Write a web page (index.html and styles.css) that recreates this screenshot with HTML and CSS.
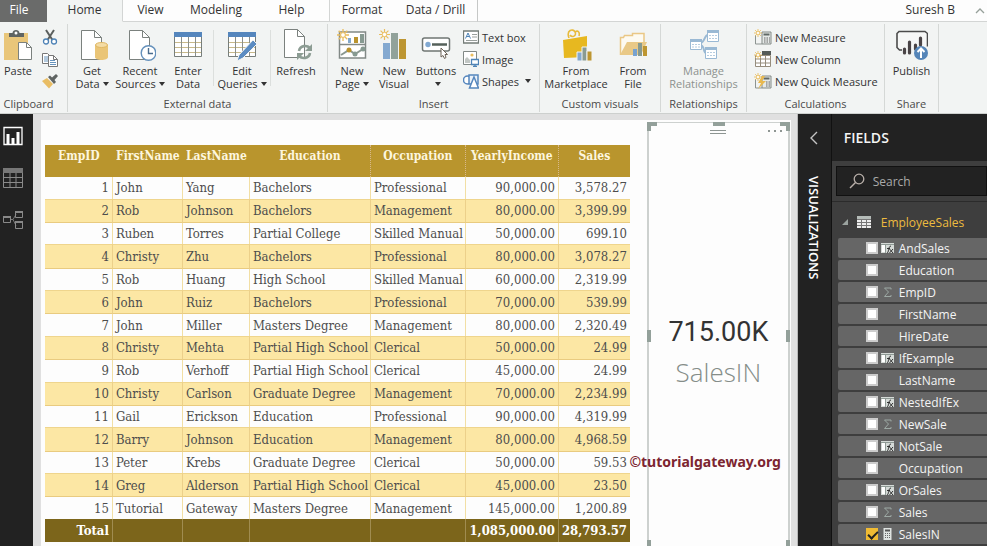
FILE: index.html
```html
<!DOCTYPE html>
<html lang="en">
<head>
<meta charset="utf-8">
<title>Employee Sales</title>
<link rel="stylesheet" href="styles.css">
</head>
<body>
<svg class="defs" aria-hidden="true">
  <symbol id="i-spark" viewBox="0 0 12 12"><path d="M6 0v12M0 6h12M1.7 1.7l8.6 8.6M10.3 1.7l-8.6 8.6" stroke="#e9bd5e" stroke-width="1.3"/><circle cx="6" cy="6" r="2.4" fill="#fff" stroke="#e9bd5e"/></symbol>
  <symbol id="i-fx" viewBox="0 0 13 12"><path d="M0 1h13v10H0z" fill="#d5dad7"/><path d="M1 3h3v7H1z" fill="#fff"/><path d="M0 2.5h13M4.5 2.5V11" stroke="#8f9a95"/><path d="M6 11c2 0 1-7 4-7M6 6.500h3M8.500 7l3.500 4M12 7l-3.500 4" stroke="#333" fill="none"/></symbol>
  <symbol id="i-sum" viewBox="0 0 13 12"><path d="M10 3.500V2H3.500l4 4-4 4.500H10V9" stroke="#9da9a4" fill="none"/></symbol>
  <symbol id="i-calc" viewBox="0 0 13 12"><path d="M2.500 0h8v12h-8z" fill="#dfe3e1"/><path d="M4 1.500h5v2H4z" fill="#555"/><path d="M4 5.500h5M4 7.500h5M4 9.500h5" stroke="#666" stroke-dasharray="1 1"/></symbol>
</svg>

<header class="ribbon">
  <nav class="tabs">
    <a class="tab file" href="#">File</a>
    <a class="tab home" href="#">Home</a>
    <a class="tab view" href="#">View</a>
    <a class="tab modeling" href="#">Modeling</a>
    <a class="tab help" href="#">Help</a>
    <a class="tab format" href="#">Format</a>
    <a class="tab drill" href="#">Data / Drill</a>
    <span class="user">Suresh B</span>
    <button class="collapse" aria-label="Collapse ribbon"><svg width="10" height="6" viewBox="0 0 10 6"><path d="M1 5l4-4 4 4" fill="none" stroke="#96a09a" stroke-width="1.300"/></svg></button>
  </nav>
  <div class="groups">
    <section class="group g-clip">
      <div class="tools">
        <button class="big paste"><svg width="32" height="32" viewBox="0 0 32 32"><path d="M2 4h24v27H2z" fill="#e9c67a"/><path d="M7 8V4h3.500c0-4 7-4 7 0H22v4z" fill="#5f6462"/><circle cx="14" cy="4" r="1.500" fill="#fff"/><path d="M16.500 13.500h8l5 5v12h-13z" fill="#fff" stroke="#7b817e"/><path d="M24.500 13.500v5h5" fill="none" stroke="#7b817e"/></svg><span>Paste</span></button>
        <div class="minis">
          <button aria-label="Cut"><svg width="16" height="16" viewBox="0 0 16 16"><path d="M4 1l6.500 10M12 1L5.500 11" stroke="#5b5f5d" stroke-width="2"/><circle cx="4" cy="12.500" r="2.500" fill="#fff" stroke="#4e83b6" stroke-width="1.300"/><circle cx="12" cy="12.500" r="2.500" fill="#fff" stroke="#4e83b6" stroke-width="1.300"/></svg></button>
          <button aria-label="Copy"><svg width="16" height="16" viewBox="0 0 16 16"><path d="M.5 2.500h5l3 3v7h-8z" fill="#fff" stroke="#777"/><path d="M2 6h4M2 8h4M2 10h4" stroke="#6794bd"/><path d="M6.500 4.500h5l4 4v7h-9z" fill="#fff" stroke="#777"/><path d="M11.500 4.500v4h4" fill="none" stroke="#777"/><path d="M8 9.500h5M8 11.500h6M8 13.500h6" stroke="#6794bd"/></svg></button>
          <button aria-label="Format painter"><svg width="16" height="16" viewBox="0 0 16 16"><path d="M0 8l5-3 6 6-4 4.500z" fill="#e9bd64"/><path d="M6 4l2-1.500 2 2 4-3.500 2 2-3.500 4 1.500 2-2 2z" fill="#5f6462"/></svg></button>
        </div>
      </div>
      <h2>Clipboard</h2>
    </section>

    <section class="group g-ext">
      <div class="tools">
        <button class="big"><svg width="32" height="32" viewBox="0 0 32 32"><path d="M5.500 1.500h13l7 7v22h-20z" fill="#fff" stroke="#7b817e"/><path d="M18.500 1.500v7h7" fill="none" stroke="#7b817e"/><path d="M19 16v12c0 4 13 4 13 0V16z" fill="#eac577"/><ellipse cx="25.500" cy="16" rx="6" ry="2.500" fill="#f4dca5" stroke="#dfb763"/></svg><span>Get<br>Data<i></i></span></button>
        <button class="big"><svg width="32" height="32" viewBox="0 0 32 32"><path d="M5.500 1.500h13l7 7v22h-20z" fill="#fff" stroke="#7b817e"/><path d="M18.500 1.500v7h7" fill="none" stroke="#7b817e"/><circle cx="24.500" cy="24" r="7.300" fill="#fff" stroke="#6490bb" stroke-width="1.400"/><path d="M24.500 19v5.500H29" fill="none" stroke="#4a6d8e" stroke-width="1.400"/></svg><span>Recent<br>Sources<i></i></span></button>
        <button class="big"><svg width="32" height="32" viewBox="0 0 32 32"><path d="M2.500 3.500h27v24h-27z" fill="#fff"/><path d="M3 13.500h27M3 18.500h27M3 23.500h27" stroke="#c8b98a"/><path d="M9.500 8v20M16.500 8v20M23.500 8v20" stroke="#8a8f8c"/><path d="M2.500 3.500h27v24h-27z" fill="none" stroke="#777e7b"/><path d="M2 3h28v5H2z" fill="#5586bd"/></svg><span>Enter<br>Data</span></button>
        <hr>
        <button class="big wide"><svg width="32" height="32" viewBox="0 0 32 32"><path d="M2.500 3.500h27v24h-27z" fill="#fff"/><path d="M3 13.500h27M3 18.500h27M3 23.500h27" stroke="#c8b98a"/><path d="M9.500 8v20M16.500 8v20M23.500 8v20" stroke="#8a8f8c"/><path d="M2.500 3.500h27v24h-27z" fill="none" stroke="#777e7b"/><path d="M2 3h28v5H2z" fill="#5586bd"/><path d="M27 11l4 4-14 14-6 3 2-6z" fill="#5b8cc2" stroke="#f2f4f3"/></svg><span>Edit<br>Queries<i></i></span></button>
        <hr>
        <button class="big"><svg width="32" height="32" viewBox="0 0 32 32"><path d="M4.500.5h13l7 7v21h-20z" fill="#fff" stroke="#7b817e"/><path d="M17.500.5v7h7" fill="none" stroke="#7b817e"/><path d="M19 22c1-6 8-6 11-3M30 24c-1 6-8 6-11 3" fill="none" stroke="#8d9d94" stroke-width="2.600"/><path d="M32 15v7h-7zM17 31v-7h7z" fill="#8d9d94"/></svg><span>Refresh</span></button>
      </div>
      <h2>External data</h2>
    </section>

    <section class="group g-ins">
      <div class="tools">
        <button class="big"><svg width="32" height="32" viewBox="0 0 32 32"><path d="M3.500 3h26v26h-26zM3 15.500h27" fill="#fff" stroke="#828986" stroke-width="1.500"/><path d="M12 9h3v5h-3z" fill="#83a8cb"/><path d="M18 8h4v6h-4z" fill="#ba932d"/><path d="M24 5h4v9h-4z" fill="#879a91"/><path d="M5 26l8-5 6 4 8-5" fill="none" stroke="#8b9891" stroke-width="2"/><circle cx="13" cy="21" r="2.500" fill="#ba932d"/><circle cx="19" cy="25" r="2.500" fill="#879a91"/><circle cx="27" cy="20" r="2.500" fill="#879a91"/><use href="#i-spark" x="1" y="0" width="12" height="12"/></svg><span>New<br>Page<i></i></span></button>
        <button class="big nv"><svg width="32" height="32" viewBox="0 0 32 32"><path d="M5 14h7v16H5z" fill="#84a9d0"/><path d="M13 4h7v26h-7z" fill="#91a29a"/><path d="M21 10h7v20h-7z" fill="#bd9632"/><use href="#i-spark" x="1" y="0" width="11" height="11"/></svg><span>New<br>Visual</span></button>
        <button class="big"><svg width="32" height="32" viewBox="0 0 32 32"><rect x="2.500" y="9" width="27" height="13" rx="2" fill="#fff" stroke="#6f7673" stroke-width="1.500"/><circle cx="8" cy="15.500" r="2.700" fill="#82a9d2"/><path d="M12 15.500h15" stroke="#55605a" stroke-width="2.500"/><path d="M21 19v9l2-1.500 1.500 3 1.500-1-1-3h2.500z" fill="#fff" stroke="#6c6257"/></svg><span>Buttons<br><i></i></span></button>
        <div class="stack">
          <button><svg width="16" height="16" viewBox="0 0 16 16"><path d="M.5 2h15v12H.5z" fill="#fff" stroke="#747c78" stroke-width="1.300"/><path d="M2.500 9.500L5 4l2.500 5.500M3.500 7.500h3" fill="none" stroke="#4e83b6"/><path d="M9 5.500h5M9 8h5M3 11.500h11" stroke="#999f9c"/></svg>Text box</button>
          <button><svg width="16" height="16" viewBox="0 0 16 16"><path d="M.5.5h13v13H.5z" fill="#fff" stroke="#828986"/><circle cx="9" cy="4" r="1.600" fill="#e9bd5e"/><path d="M2 12V8l2-2 3 3v3z" fill="#c2c7c4"/><path d="M8.500 8.500h7v5h-7zM12 13v2.500M10 15.500h4" fill="#fff" stroke="#4e83b6" stroke-width="1.300"/></svg>Image</button>
          <button><svg width="16" height="16" viewBox="0 0 16 16"><circle cx="4.500" cy="7" r="4" fill="#fff" stroke="#5586bd" stroke-width="1.500"/><path d="M6 2h9v9H6z" fill="#eaf1f8" stroke="#5586bd" stroke-width="1.500"/><path d="M11 4l4.500 11h-9z" fill="#fff" stroke="#5586bd" stroke-width="1.500"/></svg>Shapes<i></i></button>
        </div>
      </div>
      <h2>Insert</h2>
    </section>

    <section class="group g-cus">
      <div class="tools">
        <button class="big mk"><svg width="32" height="32" viewBox="0 0 32 32"><path d="M9 9c-3-8 4-10 6-6s-3 6-5 3M15 3c3-2 5 0 4 4" fill="none" stroke="#e8bb3b" stroke-width="1.600"/><path d="M3 11l24-4v21L4 29z" fill="#e7b820"/><path d="M17 23h6v9h-6z" fill="#84a9d0" stroke="#f2f4f3"/><path d="M22 18h5v14h-5z" fill="#8a9b92" stroke="#f2f4f3"/><path d="M27 22h5v10h-5z" fill="#bd9632" stroke="#f2f4f3"/></svg><span>From<br>Marketplace</span></button>
        <button class="big"><svg width="32" height="32" viewBox="0 0 32 32"><path d="M3.500 26V8.500h3l1-2h8V4.500H27v9" fill="#fdfaf1" stroke="#eac785" stroke-width="1.500"/><path d="M3 26l7-13h20l-6 13z" fill="#e9c987"/><path d="M16 20h4v7h-4z" fill="#77a2d0"/><path d="M21 14h4v13h-4z" fill="#879a91"/><path d="M26 17h4v10h-4z" fill="#bd9632"/></svg><span>From<br>File</span></button>
      </div>
      <h2>Custom visuals</h2>
    </section>

    <section class="group g-rel">
      <div class="tools">
        <button class="big mk" disabled><svg width="32" height="32" viewBox="0 0 32 32"><path d="M12 14c5 0 4-8 8-8M12 16c5 0 3 8 6 8" fill="none" stroke="#9ab9d4" stroke-width="2"/><path d="M2.500 10.500h11v10h-11zM19.500 1.500h11v11h-11zM17.500 18.500h11v11h-11z" fill="#fff" stroke="#9ab9d4"/><path d="M2 10h12v3H2zM19 1h12v3H19zM17 18h12v3H17z" fill="#9ab9d4"/><path d="M4 15.500h8M4 18h8M21 6.500h8M21 9.500h8M19 23.500h8M19 26.500h8" stroke="#b6cde0" stroke-dasharray="2 1"/></svg><span>Manage<br>Relationships</span></button>
      </div>
      <h2>Relationships</h2>
    </section>

    <section class="group g-calc">
      <div class="tools">
        <div class="stack">
          <button><svg width="18" height="16" viewBox="0 0 18 16"><path d="M1.500 6v9H8" fill="none" stroke="#8d9491"/><path d="M8 3h9v12H8z" fill="#e5e9e7" stroke="#828986"/><path d="M9.500 5.500h6" stroke="#606865" stroke-width="2"/><path d="M10 9h6M10 11h6M10 13h6" stroke="#666" stroke-dasharray="1.500 1"/><use href="#i-spark" x="0" y="0" width="8" height="8"/></svg>New Measure</button>
          <button><svg width="18" height="16" viewBox="0 0 18 16"><path d="M1.500 4.500h15v11h-15zM1 8h16M1 12h16M6.500 4v12M11.500 4v12" fill="#fff" stroke="#968d7d"/><path d="M8 0h9v4H8z" fill="#555b58"/><use href="#i-spark" x="0" y="0" width="8" height="8"/></svg>New Column</button>
          <button><svg width="18" height="16" viewBox="0 0 18 16"><path d="M1.500 6v9H8" fill="none" stroke="#8d9491"/><path d="M8 3h9v12H8z" fill="#e5e9e7" stroke="#828986"/><path d="M9.500 5.500h6" stroke="#606865" stroke-width="2"/><path d="M12 9h4M12 11h4M12 13h4" stroke="#666" stroke-dasharray="1.500 1"/><path d="M8 3l-4 7h3l-3 6 8-8H8l3-5z" fill="#e9b94f"/><use href="#i-spark" x="0" y="0" width="8" height="8"/></svg>New Quick Measure</button>
        </div>
      </div>
      <h2>Calculations</h2>
    </section>

    <section class="group g-share">
      <div class="tools">
        <button class="big"><svg width="32" height="32" viewBox="0 0 32 32"><path d="M6 21H3.500l-2.500-2.500v-14l2-2h26l2.500 2v13" fill="#f6f7f6" stroke="#4b4b4b" stroke-width="1.600"/><path d="M8.500 24v-4M13.500 24V13M19.500 20v-4M24.500 16V9" stroke="#4a4446" stroke-width="3.200" stroke-linecap="round"/><circle cx="25" cy="24" r="7" fill="#5585b8"/><path d="M25 29v-9M21.500 23l3.500-3.500 3.500 3.500" fill="none" stroke="#fff" stroke-width="2"/></svg><span>Publish</span></button>
      </div>
      <h2>Share</h2>
    </section>
  </div>
</header>

<main class="work">
  <nav class="rail">
    <button aria-label="Report view"><svg width="20" height="20" viewBox="0 0 20 20"><path d="M1 1.500h18v17H1z" fill="none" stroke="#fff" stroke-width="1.300"/><path d="M5 18V8M10 18v-6M15 18V6" stroke="#fff" stroke-width="3"/></svg></button>
    <button aria-label="Data view"><svg width="20" height="20" viewBox="0 0 20 20"><path d="M.5.500h19v19H.5zM1 9.500h18M1 14.500h18M7 4v15M13 4v15" fill="none" stroke="#8a8a8a"/><path d="M0 0h20v5H0z" fill="#777"/></svg></button>
    <button aria-label="Model view"><svg width="20" height="20" viewBox="0 0 20 20"><path d="M8 9.500h2l3-5M10 9.500l3 6" fill="none" stroke="#777"/><path d="M.5 6.500h7v6h-7zM12.500 1.500h7v6h-7zM12.500 11.500h7v7h-7z" fill="none" stroke="#8a8a8a"/><path d="M0 6h8v2H0zM12 1h8v2h-8zM12 11h8v2h-8z" fill="#888"/></svg></button>
  </nav>

  <div class="canvas">
    <div class="page">
      <div class="tablewrap">
      <table class="data">
        <colgroup><col class="c1"><col class="c2"><col class="c3"><col class="c4"><col class="c5"><col class="c6"><col class="c7"></colgroup>
        <thead><tr><th>EmpID</th><th>FirstName</th><th>LastName</th><th>Education</th><th>Occupation</th><th>YearlyIncome</th><th>Sales</th></tr></thead>
        <tbody>
          <tr><td>1</td><td>John</td><td>Yang</td><td>Bachelors</td><td>Professional</td><td>90,000.00</td><td>3,578.27</td></tr>
          <tr><td>2</td><td>Rob</td><td>Johnson</td><td>Bachelors</td><td>Management</td><td>80,000.00</td><td>3,399.99</td></tr>
          <tr><td>3</td><td>Ruben</td><td>Torres</td><td>Partial College</td><td>Skilled Manual</td><td>50,000.00</td><td>699.10</td></tr>
          <tr><td>4</td><td>Christy</td><td>Zhu</td><td>Bachelors</td><td>Professional</td><td>80,000.00</td><td>3,078.27</td></tr>
          <tr><td>5</td><td>Rob</td><td>Huang</td><td>High School</td><td>Skilled Manual</td><td>60,000.00</td><td>2,319.99</td></tr>
          <tr><td>6</td><td>John</td><td>Ruiz</td><td>Bachelors</td><td>Professional</td><td>70,000.00</td><td>539.99</td></tr>
          <tr><td>7</td><td>John</td><td>Miller</td><td>Masters Degree</td><td>Management</td><td>80,000.00</td><td>2,320.49</td></tr>
          <tr><td>8</td><td>Christy</td><td>Mehta</td><td>Partial High School</td><td>Clerical</td><td>50,000.00</td><td>24.99</td></tr>
          <tr><td>9</td><td>Rob</td><td>Verhoff</td><td>Partial High School</td><td>Clerical</td><td>45,000.00</td><td>24.99</td></tr>
          <tr><td>10</td><td>Christy</td><td>Carlson</td><td>Graduate Degree</td><td>Management</td><td>70,000.00</td><td>2,234.99</td></tr>
          <tr><td>11</td><td>Gail</td><td>Erickson</td><td>Education</td><td>Professional</td><td>90,000.00</td><td>4,319.99</td></tr>
          <tr><td>12</td><td>Barry</td><td>Johnson</td><td>Education</td><td>Management</td><td>80,000.00</td><td>4,968.59</td></tr>
          <tr><td>13</td><td>Peter</td><td>Krebs</td><td>Graduate Degree</td><td>Clerical</td><td>50,000.00</td><td>59.53</td></tr>
          <tr><td>14</td><td>Greg</td><td>Alderson</td><td>Partial High School</td><td>Clerical</td><td>45,000.00</td><td>23.50</td></tr>
          <tr><td>15</td><td>Tutorial</td><td>Gateway</td><td>Masters Degree</td><td>Management</td><td>145,000.00</td><td>1,200.89</td></tr>
        </tbody>
        <tfoot><tr><td>Total</td><td></td><td></td><td></td><td></td><td>1,085,000.00</td><td>28,793.57</td></tr></tfoot>
      </table>
      </div>
      <div class="card">
        <b class="h tl"></b><b class="h tc"></b><b class="h tr"></b><b class="h ml"></b><b class="h mr"></b><b class="h bl"></b><b class="h br"></b>
        <div class="grip"></div>
        <div class="more"><span></span><span></span><span></span></div>
        <div class="value">715.00K</div>
        <div class="caption">SalesIN</div>
      </div>
      <div class="mark">©tutorialgateway.org</div>
    </div>
  </div>

  <aside class="viz">
    <button aria-label="Expand visualizations"><svg width="10" height="14" viewBox="0 0 10 14"><path d="M8 1L2 7l6 6" fill="none" stroke="#c4c4c4" stroke-width="1.400"/></svg></button>
    <h2>VISUALIZATIONS</h2>
  </aside>

  <aside class="fields">
    <h2>FIELDS</h2>
    <div class="searchwrap">
      <label class="search"><svg width="16" height="16" viewBox="0 0 16 16"><circle cx="10" cy="6" r="4.800" fill="none" stroke="#b9b0aa" stroke-width="1.300"/><path d="M6.500 9.500L1 15" stroke="#b9b0aa" stroke-width="1.500"/></svg><input type="text" placeholder="Search" aria-label="Search"></label>
    </div>
    <div class="entity"><svg width="8" height="8" viewBox="0 0 8 8"><path d="M7 1v6H1z" fill="#9ba39f"/></svg><svg width="14" height="12" viewBox="0 0 14 12"><path d="M0 0h14v12H0z" fill="#eee"/><path d="M0 0h14v3H0z" fill="#b5bcb8"/><path d="M0 3.500h14M0 6.500h14M0 9.500h14M4.500 3v9M9.500 3v9" stroke="#777"/></svg><span>EmployeeSales</span></div>
    <div class="list">
      <label><input type="checkbox"><svg><use href="#i-fx"/></svg>AndSales</label>
      <label><input type="checkbox"><svg></svg>Education</label>
      <label><input type="checkbox"><svg><use href="#i-sum"/></svg>EmpID</label>
      <label><input type="checkbox"><svg></svg>FirstName</label>
      <label><input type="checkbox"><svg></svg>HireDate</label>
      <label><input type="checkbox"><svg><use href="#i-fx"/></svg>IfExample</label>
      <label><input type="checkbox"><svg></svg>LastName</label>
      <label><input type="checkbox"><svg><use href="#i-fx"/></svg>NestedIfEx</label>
      <label><input type="checkbox"><svg><use href="#i-sum"/></svg>NewSale</label>
      <label><input type="checkbox"><svg><use href="#i-fx"/></svg>NotSale</label>
      <label><input type="checkbox"><svg></svg>Occupation</label>
      <label><input type="checkbox"><svg><use href="#i-fx"/></svg>OrSales</label>
      <label><input type="checkbox"><svg><use href="#i-sum"/></svg>Sales</label>
      <label><input type="checkbox" checked><svg><use href="#i-calc"/></svg>SalesIN</label>
    </div>
  </aside>
</main>
</body>
</html>
```
FILE: styles.css
```css
* { box-sizing: border-box; }
body {
  margin: 0;
  height: 100vh;
  display: flex;
  flex-direction: column;
  overflow: hidden;
  font: 12px/13px "Open Sans", "Noto Sans", sans-serif;
  color: #333;
  background: #e0e0e0;
}
.defs { position: absolute; width: 0; height: 0; }
button { margin: 0; padding: 0; border: 0; background: none; font: inherit; color: inherit; }
h2 { margin: 0; font-weight: 400; font-size: 11px; line-height: 16px; }
svg { flex: none; display: block; }

/* Ribbon */
.ribbon { flex: none; background: #f2f4f3; border-bottom: 1px solid #cdd0ce; }
.tabs { display: flex; height: 22px; background: #fdfdfd; line-height: 20px; }
.tab { color: #333; text-decoration: none; text-align: center; border-bottom: 1px solid #d3d5d4; }
.file { width: 47px; padding-right: 9px; color: #fff; background: #6a6b6a; border-color: #6a6b6a; }
.home { width: 76px; background: #f2f4f3; border-bottom-color: #f2f4f3; border-right: 1px solid #d3d5d4; }
.view { width: 55px; }
.modeling { width: 76px; }
.help { width: 75px; }
.format { width: 65px; border-left: 1px solid #d3d5d4; }
.drill { width: 84px; border-right: 1px solid #c6c8c7; }
.user { flex: 1; text-align: right; border-bottom: 1px solid #d3d5d4; padding-right: 20px; }
.collapse { width: 12px; border-bottom: 1px solid #d3d5d4; display: flex; align-items: center; }
.groups { display: flex; height: 91px; padding: 2px 0 1px; }
.group { border-right: 1px solid #d5d8d6; display: flex; flex-direction: column; }
.group h2 { text-align: center; color: #4a4a4a; }
.tools { flex: 1; display: flex; justify-content: center; padding-top: 5px; font-size: 11px; }
.tools hr { width: 1px; height: 56px; margin: 1px; border: 0; background: #dcdfdd; }
.g-clip { width: 68px; }
.g-clip h2 { padding-right: 10px; }
.g-ext { width: 260px; }
.g-ins { width: 212px; }
.g-cus { width: 121px; }
.g-rel { width: 86px; }
.g-calc { width: 138px; }
.g-share { width: 54px; }
.g-clip .tools, .g-ext .tools, .g-ins .tools, .g-calc .tools { justify-content: flex-start; }
.g-calc .tools { padding-left: 4px; }
.big { width: 48px; display: flex; flex-direction: column; align-items: center; justify-content: flex-start; gap: 3px; white-space: nowrap; }
.big.nv { width: 36px; }
.big.wide { width: 54px; }
.big.mk { width: 66px; }
.big:disabled { color: #8c918e; }
.paste { width: 36px; }
.tools i { display: inline-block; border: 3px solid transparent; border-top: 4px solid #333; border-bottom: 0; margin-left: 3px; vertical-align: 2px; }
.minis { display: flex; flex-direction: column; gap: 6px; padding-left: 6px; }
.stack { display: flex; flex-direction: column; gap: 6px; padding-left: 3px; }
.stack button { display: flex; align-items: center; gap: 3px; height: 16px; white-space: nowrap; }

/* Workspace */
.work { flex: 1; display: flex; min-height: 0; }
.rail { width: 33px; background: #222; display: flex; flex-direction: column; align-items: flex-start; gap: 22px; padding: 12px 3px; }
.canvas { flex: 1; display: flex; padding: 6px 6px 0 8px; background: #e0e0e0; border-right: 1px solid #b8b8b8; }
.page { flex: 1; position: relative; display: flex; align-items: flex-start; gap: 17px; padding: 2px 1px 0 4px; background: #fdfdfd; }

.tablewrap { flex: 1; padding-top: 23px; }
.data {
  width: 100%;
  height: 397px;
  table-layout: fixed;
  border-collapse: separate;
  border-spacing: 0;
  font: 13px/16px "DejaVu Serif Condensed", "DejaVu Serif", serif;
  color: #4d4d4d;
}
.c1 { width: 68px; }
.c2 { width: 70px; }
.c3 { width: 67px; }
.c4 { width: 121px; }
.c5 { width: 95px; }
.c6 { width: 93px; }
.c7 { width: 71px; }
.data th { height: 32px; padding: 3px 0 0; vertical-align: top; color: #fdf6df; background: #b9952d; font-size: 12px; }
.data td { padding: 1px 3px 0; white-space: nowrap; border-right: 1px solid #f2dfa4; }
.data td:last-child { border-right: 0; }
.data td:nth-child(1), .data td:nth-child(6), .data td:nth-child(7) { text-align: right; }
.data th:nth-child(n+4):not(:last-child) { border-right: 1px dotted #d8b98c; }
.data tbody tr:nth-child(even) td { background: #fce7a4; border-top: 1px solid #efd58d; border-bottom: 1px solid #e9cb80; border-right-color: #ecd08a; }
.data tfoot td { height: 23px; color: #fff; background: #7c651b; font-weight: 700; border-right-color: #a08c50; }

.card { position: relative; align-self: stretch; width: 143px; display: flex; flex-direction: column; align-items: center; border: 1px solid #cdd1cf; border-width: 1px 2px 0; }
.grip { width: 16px; height: 4px; margin-top: 7px; border: solid #8d9592; border-width: 1px 0; }
.more { position: absolute; top: 7px; right: 6px; display: flex; gap: 4px; }
.more span { width: 2px; height: 2px; background: #8f9693; }
.value { margin-top: auto; padding-top: 24px; font: 27px/36px Roboto, sans-serif; color: #333; }
.caption { margin: 4px 0 auto; font: 300 26px/36px "Open Sans", sans-serif; color: #858d89; }
.h { position: absolute; width: 4px; height: 12px; background: #93a09a; }
.tl { top: -1px; left: -2px; width: 10px; height: 9px; background: none; border: solid #93a09a; border-width: 4px 0 0 4px; }
.tr { top: -1px; right: -2px; width: 10px; height: 9px; background: none; border: solid #93a09a; border-width: 4px 4px 0 0; }
.tc { top: -1px; left: 64px; width: 12px; height: 4px; }
.ml { top: 207px; left: -2px; }
.mr { top: 207px; right: -2px; }
.bl { bottom: 0; left: -2px; height: 6px; }
.br { bottom: 0; right: -2px; height: 6px; }
.mark { position: absolute; right: 10px; bottom: 75px; font: 700 14px/18px "Noto Sans", sans-serif; color: #7c2530; }

.viz { width: 34px; background: #222; border-right: 1px solid #111; color: #fff; display: flex; flex-direction: column; align-items: center; padding-top: 17px; gap: 31px; }
.viz h2 { writing-mode: vertical-rl; font-weight: 600; font-size: 13px; white-space: nowrap; }
.fields { width: 156px; background: #3e3e3e; color: #f4f4f4; overflow: hidden; }
.fields h2 { height: 47px; padding-left: 12px; line-height: 47px; font-size: 14px; font-weight: 600; background: #222; }
.searchwrap { padding: 5px 0 5px 4px; border-bottom: 1px solid #2b2b2b; }
.search { display: flex; align-items: center; gap: 8px; height: 30px; padding-left: 12px; background: #222; border: 1px solid #111; }
.search input { width: 100%; min-width: 0; border: 0; padding: 0; background: none; color: #ccc; font: inherit; outline: 0; }
.search input::placeholder { color: #aaa; opacity: 1; }
.entity { display: flex; align-items: center; height: 36px; padding: 4px 0 0 9px; gap: 8px; color: #edbb3e; }
.entity span { padding-left: 2px; }
.list { display: flex; flex-direction: column; gap: 2px; padding: 0 0 0 6px; }
.list label { display: flex; align-items: center; height: 20px; padding-left: 28px; background: #666; border-radius: 2px 0 0 2px; }
.list svg { width: 13px; height: 12px; margin: 0 5px 0 3px; }
.list input { flex: none; appearance: none; width: 12px; height: 12px; margin: 0; background: #fff; border: 2px solid #ccc; }
.list input:checked { border: 0; background: #f0bb33; }
.list input:checked::after { content: ""; display: block; width: 4px; height: 8px; margin: 1px 4px; border: solid #222; border-width: 0 2px 2px 0; transform: rotate(45deg); }
```
